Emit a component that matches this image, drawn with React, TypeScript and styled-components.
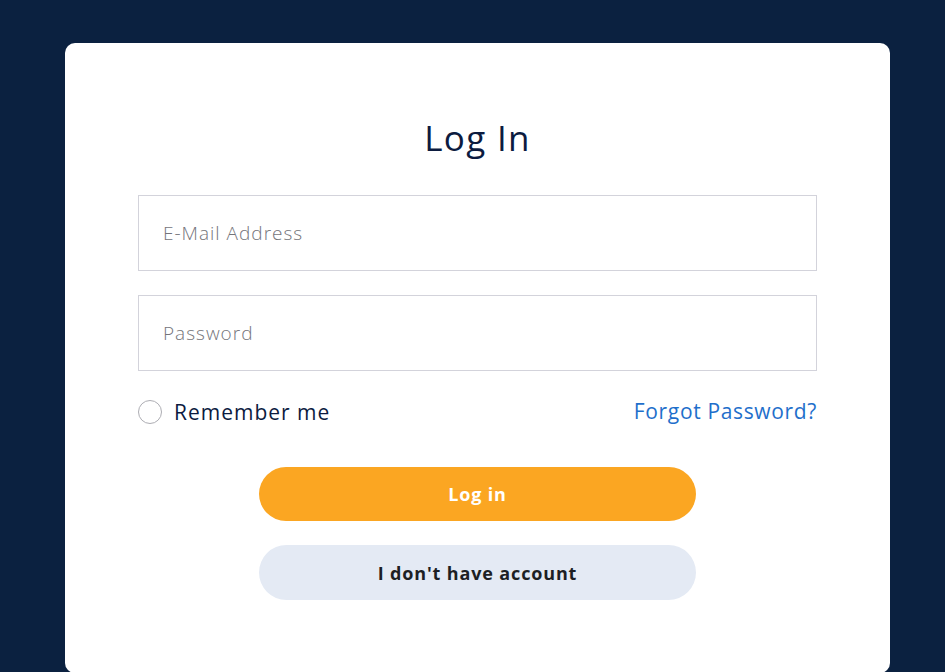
import React from "react";
import styled, { createGlobalStyle } from "styled-components";

const GlobalStyle = createGlobalStyle`
  html, body {
    margin: 0;
    padding: 0;
    background: #0b2140;
    height: 100%;
    overflow: hidden;
  }
  * {
    box-sizing: border-box;
  }
  body {
    font-family: "Open Sans", "Noto Sans", sans-serif;
  }
`;

const Page = styled.div`
  padding-top: 43px;
  padding-left: 65px;
`;

const Card = styled.div`
  width: 825px;
  height: 630px;
  background: #ffffff;
  border-radius: 10px;
  padding: 69px 73px 0;
  display: flex;
  flex-direction: column;
`;

const Title = styled.h1`
  margin: 0 0 32px;
  font-size: 35px;
  line-height: 51px;
  font-weight: 500;
  color: #0c1b3f;
  text-align: center;
  letter-spacing: 1.3px;
`;

const Field = styled.input`
  width: 100%;
  height: 76px;
  border: 1px solid #d3d3db;
  padding: 0 24px;
  font-family: inherit;
  font-size: 19px;
  font-weight: 300;
  color: #333;
  outline: none;
  letter-spacing: 1px;

  & + & {
    margin-top: 24px;
  }

  &::placeholder {
    color: #74747a;
  }
`;

const OptionsRow = styled.div`
  display: flex;
  align-items: center;
  justify-content: space-between;
  margin-top: 28px;
  height: 26px;
`;

const RememberLabel = styled.label`
  display: flex;
  align-items: center;
  gap: 12px;
  font-size: 21px;
  font-weight: 400;
  color: #0c1b3f;
  letter-spacing: 1px;
  cursor: pointer;
`;

const Radio = styled.span`
  width: 24px;
  height: 24px;
  border-radius: 50%;
  border: 1px solid #adadb3;
  background: #fff;
`;

const ForgotLink = styled.a`
  font-size: 21px;
  color: #1f6fcb;
  text-decoration: none;
  letter-spacing: 0.65px;
  margin-top: -3px;
`;

const Actions = styled.div`
  display: flex;
  flex-direction: column;
  align-items: center;
  gap: 24px;
  margin-top: 42px;
`;

const ActionButton = styled.button<{ $variant: "primary" | "secondary" }>`
  width: 437px;
  height: ${(p) => (p.$variant === "primary" ? "54px" : "55px")};
  border: none;
  border-radius: 28px;
  font-family: inherit;
  font-size: 18px;
  font-weight: 700;
  letter-spacing: 0.85px;
  cursor: pointer;
  background: ${(p) => (p.$variant === "primary" ? "#fba622" : "#e4eaf4")};
  color: ${(p) => (p.$variant === "primary" ? "#ffffff" : "#1d1f24")};
`;

export default function App() {
  return (
    <>
      <GlobalStyle />
      <Page>
        <Card>
          <Title>Log In</Title>
          <Field type="email" placeholder="E-Mail Address" />
          <Field type="password" placeholder="Password" />
          <OptionsRow>
            <RememberLabel>
              <Radio />
              Remember me
            </RememberLabel>
            <ForgotLink href="#">Forgot Password?</ForgotLink>
          </OptionsRow>
          <Actions>
            <ActionButton $variant="primary">Log in</ActionButton>
            <ActionButton $variant="secondary">I don't have account</ActionButton>
          </Actions>
        </Card>
      </Page>
    </>
  );
}
